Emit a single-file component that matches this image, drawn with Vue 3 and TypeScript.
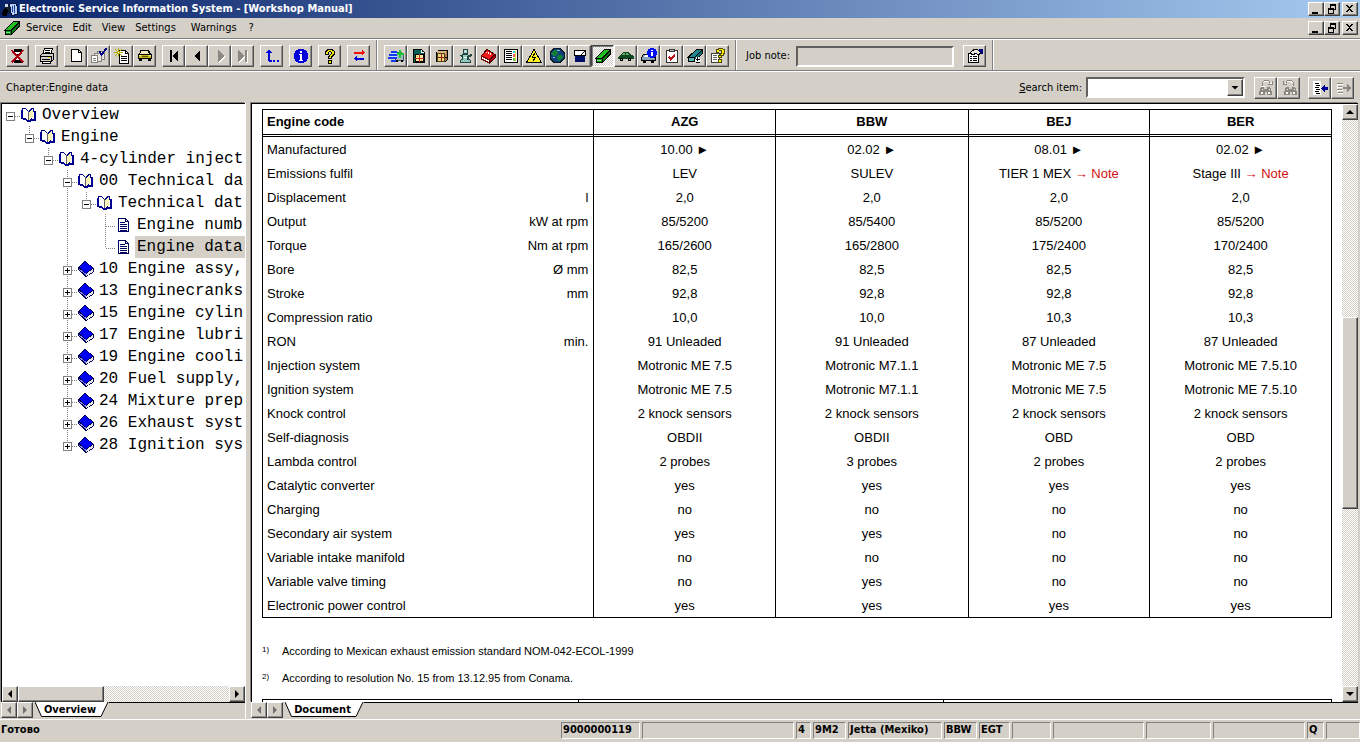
<script setup lang="ts">
import { ref } from 'vue'

type Shape = [d: string, fill: string, stroke?: string, width?: number]

const K = '#000'
const icons: Record<string, Shape[]> = {
  exit: [
    ['M4.5 1.5h7v3l-3 4 3 4v2h-7v-2l3-4-3-4z', '#fff', K],
    ['M5 2h6v2H5zM7 6h2v4H7zM5 12h6v2H5z', K],
    ['M1.5 2L13.5 14.5M13.5 2L1.5 14.5', 'none', '#b00010', 2],
  ],
  print: [
    ['M5.5 .5h8l-2 6h-8z', '#fff', K],
    ['M6 2.5h5M5.5 4.5h5', 'none', K],
    ['M1.5 7.5l2-2h11v6l-2 2h-11z', '#d4d0c8', K],
    ['M1 8.5h11.5M12.5 8v5M3 11.5h8', 'none', K],
    ['M9 9h2v1H9z', '#e8e000'],
    ['M3 13.5h8v2H3z', '#fff', K],
  ],
  page: [['M3.5 1.5h7l3 3v9h-10z', '#fff', K], ['M10.5 1.5v3h3', 'none', K]],
  pages: [
    ['M6.5 3.5h7v8h-7z', '#e8e6e0', '#808080'],
    ['M3.5 5.5h7v8h-7z', '#e8e6e0', '#808080'],
    ['M.5 7.5h6v7h-6z', '#fff', '#808080'],
    ['M2 10.5h3M2 12.5h3', 'none', '#808080'],
    ['M8.5 3.5l2 3 5-6', 'none', '#000080', 2],
  ],
  newpage: [
    ['M5.5 2.5h6l3 3v10h-9z', '#fff', K],
    ['M11.5 2.5v3h3M7 8.5h6M7 10.5h6M7 12.5h6', 'none', K],
    ['M4.5 0v9M0 4.5h9M1 1l7 7M8 1L1 8', 'none', '#b8b000'],
    ['M4 4h1v1H4z', '#fff'],
  ],
  carfront: [
    ['M3 2h9v1h1v2h1v1h1v5H1V6h1V5h1z', K],
    ['M4 3h7v2h1v1H3V5h1z', '#f0ecc0'],
    ['M2 7h12v3H2z', '#c8b820'],
    ['M2 7h2v1H2zM12 7h2v1h-2z', '#ffff80'],
    ['M5 8h6v1H5z', '#605800'],
    ['M2 11h3v2H2zM11 11h3v2h-3z', K],
  ],
  first: [['M4 2h2v12H4zM12 2v12L6 8z', K]],
  prev: [['M11 2v12L5 8z', K]],
  next: [['M7 3v12l6-6z', '#fff'], ['M6 2v12l6-6z', '#8a8880']],
  last: [['M4 3v12l6-6zM11 3h2v12h-2z', '#fff'], ['M3 2v12l6-6zM10 2h2v12h-2z', '#8a8880']],
  up: [['M4 2h2v1h1v1h1v1H6v7h2v2H5v-1H4V5H2V4h1V3h1zM9 12h2v2H9zM13 12h2v2h-2z', '#0000d8']],
  info: [
    ['M5 1h6v1h2v1h1v2h1v6h-1v2h-1v1h-2v1H5v-1H3v-1H2v-2H1V5h1V3h1V2h2z', '#0000d8'],
    ['M7 3h2v2H7zM6 6h3v6h1v1H6v-1h1V7H6z', '#fff'],
  ],
  help: [
    ['M4 2h1V1h6v1h1v1h1v4h-1v1h-1v1h-1v2H6V8h1V7h1V6h1V4H7v3H3V3h1zM6 12h4v4H6z', K],
    ['M5 3h1V2h4v1h2v3h-1v1h-1v1H9v2H7V9h1V7h1V6h1V4H9V3H7v1H6v2H4V4h1zM7 13h2v2H7z', '#f0e800'],
  ],
  swap: [
    ['M3 4h8V2h1v1h1v1h1v1h-1v1h-1v1h-1V6H3z', '#f01010'],
    ['M13 10H6V8H5v1H4v1H3v1h1v1h1v1h1v-1h7z', '#0000d8'],
  ],
  fast: [
    ['M7.5 6.5l2-2h4l2 3v5h-8z', '#a8b8c0', '#405868'],
    ['M3 3h6v2H3zM1 6h8v2H1zM0 9h9v2H0zM3 12h5v2H3z', '#1038f0'],
    ['M4 5h5v1H4zM2 8h7v1H2z', '#c8e0ff'],
    ['M11 2h2v3h3v2h-3v3h-2V7H9V5h2z', '#18c830'],
    ['M8 12h2v2H8zM13 12h2v2h-2z', K],
  ],
  datadoc: [
    ['M2.5 1.5h8l3 3v10h-11z', '#006058', K],
    ['M10 2h1v2h2v1h-3z', '#fff'],
    ['M4.5 6.5h8v7h-8z', '#f8f0a0', K],
    ['M8.5 6v8M4 10.5h9', 'none', '#c02010'],
    ['M6 8h1v1H6zM10 12h1v1h-1z', '#e8a010'],
  ],
  box: [
    ['M2.5 4.5l2-2h9v9l-2 2h-9z', '#b08048', K],
    ['M3 3h9v3H3z', '#d8b880'],
    ['M3.5 5.5h7v8h-7z', '#e8d878', '#504020'],
    ['M4 9.5h6M7.5 6v7', 'none', '#901808'],
    ['M11 9.5h2', 'none', K],
  ],
  figure: [
    ['M6.500 1.500h4v4h-4z', '#a8d8d0', '#204840'],
    ['M5 6h6v1h2V6h2v2h-1v1h-2v2h1v1h1v3H3v-3h1v-1h1V9H4V8H3V7h2z', '#204840'],
    ['M6 7h5v1h-1v4h3v2H4v-2h2z', '#90c8c0'],
    ['M8 3h1v1H8zM7 9h3v1H7z', '#fff'],
  ],
  redbook: [
    ['M1.5 7.5L7 1.5l8 5-5.5 6z', '#f01818', '#500000'],
    ['M1.5 8v3l8 4v-3z', '#fff', '#700000'],
    ['M9.5 12l5.5-5v3l-5.5 5z', '#c00010', '#500000'],
    ['M6 4h1v1H6zM8 4h1v2H8zM10 5h1v2h-1z', '#fff'],
  ],
  list: [
    ['M1.5 1.5h13v13h-13z', '#fff', K],
    ['M3 3.5h6M3 5.5h6M3 7.5h6M3 9.5h6M3 11.5h6', 'none', K],
    ['M10 3h2v2h-2z', '#20d8e0'], ['M10 6h2v3h-2z', '#f06060'], ['M10 10h2v3h-2z', '#60c040'],
    ['M12 3h1v10h-1z', '#f0d840'],
  ],
  warn: [
    ['M8 1.5L15.5 14.5H.5z', '#fff020', K],
    ['M9 5L6.5 9h3L7 13', 'none', K],
  ],
  globe: [
    ['M5 .5h6l4 4v6l-4 4H5l-4-4v-6z', '#104078', '#081828'],
    ['M5 2h3l1 3-3 3H4L2 6zM9 7h4l1 2-3 4H9L8 9z', '#108038'],
    ['M8 2h3v1H8zM4 9h2v1H4z', '#80c0e0'],
  ],
  bin: [
    ['M2.500 2.500h11v5h-11z', '#fff', K],
    ['M9 7l4-4', 'none', K],
    ['M3.500 8.500h9v5h-9z', '#001068', '#001068'],
  ],
  greenbook: [
    ['M1 10L9.5 1.5h6L7.5 10z', '#20c020', K],
    ['M1 10.5h6.5v4H1z', '#00a010', K],
    ['M7.5 10.5l8-8.5v4l-8 8.5z', '#008010', K],
    ['M2 12.5h4', 'none', '#80e080'],
  ],
  greencar: [
    ['M1 8l2-1 2-3h6l2 3h2l1 2v2H0V9z', '#104820'],
    ['M5 5h2v2H4zM8 5h2l1 2H8z', '#68a868'],
    ['M2 10h3v3H2zM10 10h3v3h-3z', K],
    ['M3 11h1v1H3zM11 11h1v1h-1z', '#a0c0a0'],
  ],
  carinfo: [
    ['M.500 9.500l2-3h6l3 3h3v3H.500z', '#88a0b8', K],
    ['M2 12h3v3H2zM10 12h3v3h-3z', K],
    ['M4 7h4v2H3z', '#fff'],
    ['M9 0h4v1h2v2h1v4h-1v2h-2v1H9V9H7V7H6V3h1V1h2z', '#0010f0'],
    ['M10 2h2v1h-2zM10 4h2v4h-2z', '#fff'],
  ],
  clipboard: [
    ['M2.5 2.5h11v12h-11z', '#fff', '#303030'],
    ['M5.5 1.5h5v2h-5z', '#c8c8c8', '#303030'],
    ['M5 8.5l2 3 4-5', 'none', '#c01018', 2],
  ],
  tealbook: [
    ['M1 9.500L9.5 1.5h6L7.5 9.500z', '#208890', K],
    ['M1 9.500h6.5v4H1z', '#60b0b8', K],
    ['M7.5 9.500l8-8v4l-8 8z', '#106870', K],
    ['M9 9h3v2h2v2h-1v2H9v-2H8v-2h1z', '#fff'],
    ['M10.500 9v4M9 11.500h4M9 14.500h4', 'none', K],
  ],
  dochelp: [
    ['M1.500 5.500h8v9h-8z', '#fff', '#404040'],
    ['M3 7.5h4M3 9.5h4M3 11.5h4', 'none', '#606060'],
    ['M6 1h2V0h5v1h2v5h-1v2h-2v2H8V7h2V5h1V3H9v2H6zM8 11h4v4H8z', '#504800'],
    ['M7 2h2V1h4v1h1v3h-1v2h-2v2H9V8h2V6h1V2H9v2H7zM9 12h2v2H9z', '#f8f000'],
  ],
  note: [
    ['M1.5 5.5h10v9h-10z', '#fff', K],
    ['M3 8.5h2M6 8.5h4M3 10.5h2M6 10.5h4M3 12.5h2M6 12.5h4', 'none', K],
    ['M3 5l4-3.5 4 .5 3 3-3 2-2-2-3 2z', '#e8e6e0', K],
    ['M12 1h4v5h-2V4h-2z', '#000080'],
  ],
  findnext: [
    ['M4 3l3-2h3l3 3V2M4 3v3h3', 'none', '#fff', 2],
    ['M4.500 5.500v-3l2-2h4l2 3M10 4.500h4V1', 'none', '#8a8880'],
    ['M3 7h3v2h3V7h3l2 5v3H9v-3H7v3H1v-3z', '#8a8880'],
    ['M4 9h1v1H4zM11 9h1v1h-1zM3 12h2v2H3zM10 12h2v2h-2z', '#fff'],
  ],
  findprev: [
    ['M12 3L9 1H7L4 4M12 3v3', 'none', '#fff', 2],
    ['M12.500 5.500v-3l-2-2h-4l-2 3M6 4.500H2V1', 'none', '#8a8880'],
    ['M5 7h3v2h3V7h3l2 5v3h-5v-3H9v3H3v-3z', '#8a8880'],
    ['M6 9h1v1H6zM13 9h1v1h-1zM5 12h2v2H5zM12 12h2v2h-2z', '#fff'],
  ],
  insert: [
    ['M1 1h8v14H1z', '#fff'],
    ['M3 3.5h4M4 5.500h4M3 7.500h4M4 9.500h4M3 11.500h4M4 13.500h4', 'none', K],
    ['M9 8l4-4v3h3v3h-3v3z', '#000090'],
  ],
  extract: [
    ['M2 4.500h6M2 7.500h5M2 10.500h6M3 13.500h5M2 4v8', 'none', '#fff'],
    ['M2 3.500h6M3 6.500h4M2 9.500h5M3 12.500h5', 'none', '#8a8880'],
    ['M16 8l-4-4v3H8v2h4v3z', '#8a8880'],
  ],
  app: [
    ['M1 8l4-4h4v8H1z', '#102030'],
    ['M0 12l3-5 3 3-1 5H1z', K],
    ['M7.500 2.500h6l2 3v8l-6 1z', '#b8d0f0', '#001040'],
    ['M10 5v6M12 4v8', 'none', '#2040a0'],
    ['M3 3h3v3H3z', '#d0d8e0'],
  ],
  open: [
    ['M1 1h3l3 2v1l4-3h2v3h2v10h-5v1H7l-3-2H2v-1H0V3h1z', '#000090'],
    ['M2 2h2l3 2v9l-3-2H2z', '#fff'],
    ['M8 5l3-3h1v9h-1l-3 2z', '#f8f4b8'],
    ['M12 5h1v7h-3l2-1z', '#fff'],
    ['M7 4h1v9H7z', '#606060'],
  ],
  leaf: [
    ['M2.500 1.500h7l3 3v10h-10z', '#fff', '#000060'],
    ['M9.500 1.500v3h3M4 5.500h5M4 7.500h7M4 9.500h7M4 11.500h7M4 13h7', 'none', '#000060'],
  ],
  closed: [
    ['M0 6L7 0l9 7v4l-8 5-8-7z', '#000050'],
    ['M1 6L7 1l8 6-7 5z', '#0000f0'],
    ['M8 13l7-5v3l-7 4z', '#e8e8e8'],
    ['M1 8l7 5.500', 'none', '#8080ff'],
  ],
  min: [['M2 9h6v2H2z', K]],
  restore: [['M4 1h6v6H8v4H2V5h2zM5 3v2h3v1h1V3zM3 7v3h4V7z', K]],
  close: [['M2 2h2v1h1v1h1V3h1V2h2v1H8v1H7v1H6v1h1v1h1v1h1v1H7V8H6V7H5v1H4v1H2V8h1V7h1V6h1V5H4V4H3V3H2z', K]],
}

const menu = ['Service', 'Edit', 'View', 'Settings', 'Warnings', '?']

const navGroups: string[][] = [
  ['exit'], ['print'], ['page', 'pages', 'newpage', 'carfront'],
  ['first', 'prev', 'next', 'last'], ['up'], ['info'], ['help'], ['swap'],
]
const modules = [
  'fast', 'datadoc', 'box', 'figure', 'redbook', 'list', 'warn', 'globe',
  'bin', 'greenbook', 'greencar', 'carinfo', 'clipboard', 'tealbook', 'dochelp',
]
const activeModule = ref('greenbook')
const jobNote = ref('')
const searchItem = ref('')

interface Node { level: number; icon: 'open' | 'closed' | 'leaf'; text: string; last?: boolean; through?: number[] }
const nodes: Node[] = [
  { level: 0, icon: 'open', text: 'Overview', last: true },
  { level: 1, icon: 'open', text: 'Engine', last: true },
  { level: 2, icon: 'open', text: '4-cylinder inject', last: true },
  { level: 3, icon: 'open', text: '00 Technical da' },
  { level: 4, icon: 'open', text: 'Technical dat', last: true, through: [3] },
  { level: 5, icon: 'leaf', text: 'Engine numb', through: [3] },
  { level: 5, icon: 'leaf', text: 'Engine data', last: true, through: [3] },
  { level: 3, icon: 'closed', text: '10 Engine assy,' },
  { level: 3, icon: 'closed', text: '13 Enginecranks' },
  { level: 3, icon: 'closed', text: '15 Engine cylin' },
  { level: 3, icon: 'closed', text: '17 Engine lubri' },
  { level: 3, icon: 'closed', text: '19 Engine cooli' },
  { level: 3, icon: 'closed', text: '20 Fuel supply,' },
  { level: 3, icon: 'closed', text: '24 Mixture prep' },
  { level: 3, icon: 'closed', text: '26 Exhaust syst' },
  { level: 3, icon: 'closed', text: '28 Ignition sys', last: true },
]
const selected = ref('Engine data')
const step = 19
const mid = (level: number) => level * step + 8.5

function guides(n: Node): string {
  const x = mid(n.level)
  let d = `M${x} 12.5H${x + 11}`
  if (n.level > 0) d += `M${x} 0V${n.last ? 12 : 22}`
  for (const l of n.through ?? []) d += `M${mid(l)} 0V22`
  return d
}

const codes = ['AZG', 'BBW', 'BEJ', 'BER']
interface Row { name: string; unit?: string; v: string[] }
const same = (s: string) => [s, s, s, s]
const rows: Row[] = [
  { name: 'Manufactured', v: ['10.00 ►', '02.02 ►', '08.01 ►', '02.02 ►'] },
  { name: 'Emissions fulfil', v: ['LEV', 'SULEV', 'TIER 1 MEX|Note', 'Stage III|Note'] },
  { name: 'Displacement', unit: 'l', v: same('2,0') },
  { name: 'Output', unit: 'kW at rpm', v: ['85/5200', '85/5400', '85/5200', '85/5200'] },
  { name: 'Torque', unit: 'Nm at rpm', v: ['165/2600', '165/2800', '175/2400', '170/2400'] },
  { name: 'Bore', unit: 'Ø mm', v: same('82,5') },
  { name: 'Stroke', unit: 'mm', v: same('92,8') },
  { name: 'Compression ratio', v: ['10,0', '10,0', '10,3', '10,3'] },
  { name: 'RON', unit: 'min.', v: ['91 Unleaded', '91 Unleaded', '87 Unleaded', '87 Unleaded'] },
  { name: 'Injection system', v: ['Motronic ME 7.5', 'Motronic M7.1.1', 'Motronic ME 7.5', 'Motronic ME 7.5.10'] },
  { name: 'Ignition system', v: ['Motronic ME 7.5', 'Motronic M7.1.1', 'Motronic ME 7.5', 'Motronic ME 7.5.10'] },
  { name: 'Knock control', v: same('2 knock sensors') },
  { name: 'Self-diagnosis', v: ['OBDII', 'OBDII', 'OBD', 'OBD'] },
  { name: 'Lambda control', v: ['2 probes', '3 probes', '2 probes', '2 probes'] },
  { name: 'Catalytic converter', v: same('yes') },
  { name: 'Charging', v: same('no') },
  { name: 'Secondary air system', v: ['yes', 'yes', 'no', 'no'] },
  { name: 'Variable intake manifold', v: same('no') },
  { name: 'Variable valve timing', v: ['no', 'yes', 'no', 'no'] },
  { name: 'Electronic power control', v: same('yes') },
]
const notes = [
  'According to Mexican exhaust emission standard NOM-042-ECOL-1999',
  'According to resolution No. 15 from 13.12.95 from Conama.',
]

const tabs = { overview: { label: 'Overview', w: 74 }, document: { label: 'Document', w: 79 } }
const tabPath = (w: number) => `M0 0L6.5 14.500H${w - 8}L${w - 1} 0`

const panes: { text: string; w: number }[] = [
  { text: '9000000119', w: 79 }, { text: '', w: 152 }, { text: '4', w: 15 }, { text: '9M2', w: 33 },
  { text: 'Jetta (Mexiko)', w: 94 }, { text: 'BBW', w: 33 }, { text: 'EGT', w: 31 }, { text: '', w: 39 },
  { text: '', w: 91 }, { text: '', w: 65 }, { text: '', w: 92 }, { text: 'Q', w: 17 }, { text: '', w: 34 },
]
</script>

<template>
  <div class="app">
    <header class="title">
      <svg class="ico" viewBox="0 0 16 16"><path v-for="(s, i) in icons.app" :key="i" :d="s[0]" :fill="s[1]" :stroke="s[2]" /></svg>
      <h1>Electronic Service Information System - [Workshop Manual]</h1>
      <div class="winbtns">
        <button v-for="b in ['min', 'restore', 'close']" :key="b" class="win" :class="b" :aria-label="b">
          <svg viewBox="0 0 12 12"><path v-for="(s, i) in icons[b]" :key="i" :d="s[0]" :fill="s[1]" fill-rule="evenodd" /></svg>
        </button>
      </div>
    </header>

    <nav class="menu">
      <svg class="ico" viewBox="0 0 16 16"><path v-for="(s, i) in icons.greenbook" :key="i" :d="s[0]" :fill="s[1]" :stroke="s[2]" /></svg>
      <button v-for="m in menu" :key="m" class="item">{{ m }}</button>
      <div class="winbtns">
        <button v-for="b in ['min', 'restore', 'close']" :key="b" class="win" :class="b" :aria-label="b + ' document'">
          <svg viewBox="0 0 12 12"><path v-for="(s, i) in icons[b]" :key="i" :d="s[0]" :fill="s[1]" fill-rule="evenodd" /></svg>
        </button>
      </div>
    </nav>

    <div class="toolbar">
      <div class="band nav">
        <div v-for="(g, gi) in navGroups" :key="gi" class="group">
          <button v-for="b in g" :key="b" class="tool" :aria-label="b">
            <svg class="ico" viewBox="0 0 16 16"><path v-for="(s, i) in icons[b]" :key="i" :d="s[0]" :fill="s[1]" :stroke="s[2]" :stroke-width="s[3]" /></svg>
          </button>
        </div>
      </div>
      <div class="band mods">
        <button
          v-for="b in modules" :key="b" class="tool" :class="{ pressed: b === activeModule }"
          :aria-label="b" :aria-pressed="b === activeModule" @click="activeModule = b"
        >
          <svg class="ico" viewBox="0 0 16 16"><path v-for="(s, i) in icons[b]" :key="i" :d="s[0]" :fill="s[1]" :stroke="s[2]" :stroke-width="s[3]" /></svg>
        </button>
      </div>
      <div class="band job">
        <label for="job">Job note:</label>
        <input id="job" v-model="jobNote" type="text">
        <button class="tool" aria-label="Edit job note">
          <svg class="ico" viewBox="0 0 16 16"><path v-for="(s, i) in icons.note" :key="i" :d="s[0]" :fill="s[1]" :stroke="s[2]" /></svg>
        </button>
      </div>
    </div>

    <div class="chapter">
      <span class="where">Chapter:Engine data</span>
      <label for="search"><u>S</u>earch item:</label>
      <div class="combo">
        <select id="search" v-model="searchItem"><option value="" /></select>
        <span class="drop"><i class="tri down" /></span>
      </div>
      <div v-for="(g, gi) in [['findnext', 'findprev'], ['insert', 'extract']]" :key="gi" class="group">
        <button v-for="b in g" :key="b" class="tool" :aria-label="b">
          <svg class="ico" viewBox="0 0 16 16"><path v-for="(s, i) in icons[b]" :key="i" :d="s[0]" :fill="s[1]" :stroke="s[2]" /></svg>
        </button>
      </div>
    </div>

    <main class="work">
      <section class="side">
        <div class="pane">
          <ul class="tree">
            <li v-for="n in nodes" :key="n.text">
              <svg class="rail" :width="n.level * step + 19" height="22">
                <path :d="guides(n)" class="dots" />
                <g v-if="n.icon !== 'leaf'">
                  <rect :x="mid(n.level) - 4" y="8.5" width="8" height="8" fill="#fff" stroke="#808080" />
                  <path :d="`M${mid(n.level) - 2.5} 12.5h5` + (n.icon === 'closed' ? `M${mid(n.level)} 10v5` : '')" stroke="#000" />
                </g>
              </svg>
              <svg class="ico" viewBox="0 0 16 16"><path v-for="(s, i) in icons[n.icon]" :key="i" :d="s[0]" :fill="s[1]" :stroke="s[2]" /></svg>
              <button class="node" :class="{ on: selected === n.text }" @click="selected = n.text">{{ n.text }}</button>
            </li>
          </ul>
          <div class="hscroll">
            <button class="sb" aria-label="Scroll left"><i class="tri left" /></button>
            <div class="thumb" />
            <span class="fill" />
            <button class="sb" aria-label="Scroll right"><i class="tri right" /></button>
          </div>
        </div>
        <div class="tabs">
          <button class="step" aria-label="Previous tab"><i class="tri left" /></button>
          <button class="step" aria-label="Next tab"><i class="tri right" /></button>
          <button class="tab">
            <svg :width="tabs.overview.w" height="16"><path :d="tabPath(tabs.overview.w)" /></svg>
            <span>{{ tabs.overview.label }}</span>
          </button>
          <span class="rest" />
        </div>
      </section>

      <section class="doc">
        <div class="pane">
          <div class="sheet">
            <table class="data">
              <colgroup><col class="c-name"><col class="c-unit"><col class="c-v"><col class="c-w"><col class="c-v"><col class="c-v"></colgroup>
              <thead>
                <tr><th colspan="2" class="first">Engine code</th><th v-for="c in codes" :key="c">{{ c }}</th></tr>
              </thead>
              <tbody>
                <tr v-for="r in rows" :key="r.name">
                  <td class="name">{{ r.name }}</td>
                  <td class="unit">{{ r.unit }}</td>
                  <td v-for="(v, i) in r.v" :key="i" class="val">
                    {{ v.split('|')[0] }}<a v-if="v.includes('|')" href="#note"> → {{ v.split('|')[1] }}</a>
                  </td>
                </tr>
              </tbody>
            </table>
            <ol id="note" class="notes">
              <li v-for="(t, i) in notes" :key="t"><sup>{{ i + 1 }})</sup><span>{{ t }}</span></li>
            </ol>
            <div class="nexttable"><span class="n1" /><span class="n2" /><span class="n3" /></div>
          </div>
          <div class="vscroll">
            <button class="sb" aria-label="Scroll up"><i class="tri up" /></button>
            <span class="above" />
            <div class="thumb" />
            <span class="below" />
            <button class="sb" aria-label="Scroll down"><i class="tri down" /></button>
          </div>
        </div>
        <div class="tabs">
          <button class="step" aria-label="Previous tab"><i class="tri left" /></button>
          <button class="step" aria-label="Next tab"><i class="tri right" /></button>
          <button class="tab">
            <svg :width="tabs.document.w" height="16"><path :d="tabPath(tabs.document.w)" /></svg>
            <span>{{ tabs.document.label }}</span>
          </button>
          <span class="rest" />
        </div>
      </section>
    </main>

    <footer class="status">
      <span class="ready">Готово</span>
      <span v-for="(p, i) in panes" :key="i" class="cell" :style="{ width: p.w + 'px' }">{{ p.text }}</span>
    </footer>
  </div>
</template>

<style>
body { background: #d4d0c8; }
</style>

<style scoped>
.app {
  --face: #d4d0c8;
  --ui: "DejaVu Sans Condensed", "DejaVu Sans", sans-serif;
  display: flex;
  flex-direction: column;
  height: 100vh;
  overflow: hidden;
  background: var(--face);
  color: #000;
  font: 11px/14px var(--ui);
}
* { box-sizing: border-box; }
button { padding: 0; border: 0; background: none; color: inherit; font: inherit; }
.ico { display: block; flex: none; width: 16px; height: 16px; shape-rendering: crispEdges; }

.title {
  display: flex;
  align-items: center;
  height: 18px;
  padding: 0 2px;
  background: linear-gradient(90deg, #0a246a, #a6caf0);
  color: #fff;
}
.title h1 { margin: 0 auto 0 1px; font: bold 11px/18px var(--ui); white-space: nowrap; }
.winbtns { display: flex; margin-left: auto; }
.win {
  display: flex;
  width: 16px;
  height: 14px;
  background: var(--face);
  border: 1px solid;
  border-color: #fff #404040 #404040 #fff;
  box-shadow: inset -1px -1px #808080;
}
.win svg { width: 12px; height: 12px; margin-left: 1px; shape-rendering: crispEdges; }
.win.close { margin-left: 2px; }

.menu {
  display: flex;
  align-items: center;
  height: 21px;
  padding: 0 2px 0 4px;
  border-bottom: 1px solid #808080;
}
.menu .item { margin-left: 10px; }
.menu .ico + .item { margin-left: 6px; }
.menu .item:nth-of-type(5) { margin-left: 15px; }
.menu .item:nth-of-type(6) { margin-left: 12px; }

.toolbar {
  display: flex;
  height: 32px;
  border-top: 1px solid #fff;
  border-bottom: 1px solid #808080;
}
.band {
  display: flex;
  align-items: center;
  padding: 2px 6px 0;
  border-right: 1px solid #808080;
  box-shadow: 1px 0 #fff;
}
.band.nav { gap: 6px; }
.band.mods { padding-left: 7px; }
.band.job { padding-left: 10px; }
.job input {
  width: 158px;
  height: 21px;
  margin: 0 9px 0 6px;
  background: var(--face);
  border: 2px solid;
  border-color: #606060 #fff #fff #606060;
}
.group { display: flex; }
.tool {
  display: flex;
  align-items: center;
  justify-content: center;
  width: 23px;
  height: 22px;
  background: var(--face);
  border: 1px solid;
  border-color: #fff #505050 #505050 #fff;
  box-shadow: inset -1px -1px #909090;
}
.tool.pressed {
  background: repeating-conic-gradient(#fff 0 25%, var(--face) 0 50%) 0 0 / 2px 2px;
  border-color: #404040 #fff #fff #404040;
  box-shadow: inset 1px 1px #808080;
}

.chapter {
  display: flex;
  align-items: center;
  height: 32px;
  padding: 0 6px;
  border-top: 1px solid #fff;
}
.where { margin-right: auto; }
.combo {
  display: flex;
  width: 159px;
  height: 21px;
  margin: 0 9px 0 4px;
  background: #fff;
  border: 2px solid;
  border-color: #606060 #fff #fff #606060;
}
.combo select { flex: 1; min-width: 0; appearance: none; border: 0; background: #fff; font: inherit; }
.drop, .sb {
  display: flex;
  align-items: center;
  justify-content: center;
  flex: none;
  width: 16px;
  height: 16px;
  background: var(--face);
  border: 1px solid;
  border-color: #fff #404040 #404040 #fff;
  box-shadow: inset -1px -1px #808080;
}
.drop { height: 17px; }
.chapter .group + .group { margin-left: 8px; }

.tri { width: 7px; height: 7px; background: #000; }
.tri.down { width: 8px; height: 4px; clip-path: polygon(0 0, 100% 0, 50% 100%); }
.tri.up { width: 8px; height: 4px; clip-path: polygon(50% 0, 100% 100%, 0 100%); }
.tri.left { width: 4px; height: 8px; clip-path: polygon(100% 0, 100% 100%, 0 50%); }
.tri.right { width: 4px; height: 8px; clip-path: polygon(0 0, 100% 50%, 0 100%); }

.work { display: flex; flex: 1; min-height: 0; }
.side { display: flex; flex-direction: column; flex: none; width: 246px; border-right: 1px solid #fff; }
.doc { display: flex; flex-direction: column; flex: 1; min-width: 0; margin-left: 4px; padding-right: 2px; }
.pane {
  display: flex;
  flex: 1;
  min-height: 0;
  background: #fff;
  border-left: 1px solid #000;
  border-top: 1px solid #000;
  box-shadow: -1px -1px #808080;
}
.side .pane { flex-direction: column; margin-left: 1px; }
.doc .pane { margin-left: 1px; }

.tree { flex: 1; min-height: 0; margin: 0; padding: 0; overflow: hidden; list-style: none; }
.tree li { display: flex; align-items: center; height: 22px; }
.rail { flex: none; shape-rendering: crispEdges; }
.dots { fill: none; stroke: #808080; stroke-dasharray: 1 1; }
.node { flex: 1; height: 22px; margin-left: 3px; padding: 1px 0 0 2px; overflow: hidden; text-align: left; white-space: nowrap; font: 16px/21px "Liberation Mono", monospace; }
.node.on { background: var(--face); }

.hscroll { display: flex; flex: none; height: 16px; }
.hscroll .fill, .vscroll .above, .vscroll .below {
  background: repeating-conic-gradient(#fff 0 25%, var(--face) 0 50%) 0 0 / 2px 2px;
}
.hscroll .fill { flex: 1; }
.thumb {
  background: var(--face);
  border: 1px solid;
  border-color: #fff #404040 #404040 #fff;
  box-shadow: inset -1px -1px #808080;
}
.hscroll .thumb { width: 86px; }
.vscroll { display: flex; flex-direction: column; flex: none; width: 16px; }
.vscroll .above { flex: 198; }
.vscroll .thumb { flex: 190; }
.vscroll .below { flex: 178; }

.tabs { display: flex; flex: none; height: 17px; padding-left: 1px; }
.step {
  display: flex;
  align-items: center;
  justify-content: center;
  width: 16px;
  height: 16px;
  border: 1px solid;
  border-color: #fff #404040 #404040 #fff;
  box-shadow: inset -1px -1px #909090;
}
.step .tri { background: #707070; }
.tab { display: grid; margin-left: 2px; font: bold 11px/16px var(--ui); }
.tab svg, .tab span { grid-area: 1 / 1; }
.tab svg { display: block; }
.tab path { fill: #fff; stroke: #000; }
.tab span { z-index: 1; padding-right: 4px; }
.rest { flex: 1; height: 1px; background: #000; }

.sheet { flex: 1; min-width: 0; padding: 5px 10px 0; overflow: hidden; font: 13px/16px "Liberation Sans", Arial, sans-serif; }
.data { width: 100%; table-layout: fixed; border: 1px solid #000; border-right: 0; border-spacing: 0; }
.c-name { width: 22%; }
.c-unit { width: 9%; }
.c-v { width: 17%; }
.c-w { width: 18%; }
.data th { height: 27px; padding: 0; border-right: 1px solid #000; border-bottom: 3px double #000; font-size: 13px; }
.data .first { padding-left: 4px; text-align: left; }
.data td { height: 24px; padding: 2px 0 0; white-space: nowrap; }
.data .name { padding-left: 4px; }
.data .unit { padding-right: 5px; text-align: right; border-right: 1px solid #000; }
.data .val { text-align: center; border-right: 1px solid #000; }
.data a { color: #d01010; text-decoration: none; }

.notes { margin: 20px 0 0; padding: 0; list-style: none; font-size: 11px; }
.notes li { display: flex; height: 27px; line-height: 27px; }
.notes sup { width: 20px; font-size: 8px; line-height: 24px; vertical-align: top; }
.nexttable { display: flex; height: 40px; margin-top: 7px; border: 1px solid #000; }
.n1 { flex: 316; border-right: 1px solid #000; }
.n2 { flex: 365; border-right: 1px solid #000; }
.n3 { flex: 388; }

.status {
  display: flex;
  align-items: center;
  gap: 2px;
  height: 23px;
  padding-bottom: 2px;
  border-top: 1px solid #fff;
  font-weight: bold;
}
.ready { margin-right: auto; padding-left: 1px; }
.cell {
  flex: none;
  height: 17px;
  padding-left: 1px;
  overflow: hidden;
  white-space: nowrap;
  border: 1px solid;
  border-color: #808080 #fff #fff #808080;
}
</style>
